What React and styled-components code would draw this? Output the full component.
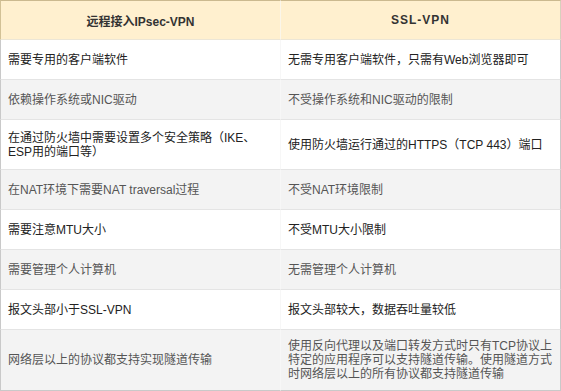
import React from "react";
import styled, { createGlobalStyle } from "styled-components";

const Global = createGlobalStyle`
  html, body { margin: 0; padding: 0; background: #fff; }
  body { font-family: "Liberation Sans", "Noto Sans CJK SC", sans-serif; }
`;

const Table = styled.div`
  width: 561px;
  height: 391px;
  box-sizing: border-box;
  display: grid;
  grid-template-columns: 280px 281px;
  grid-template-rows: 40px 40px 40px 50px 40px 40px 40px 40px 61px;
  font-size: 12px;
`;

const HeadCell = styled.div`
  background: #fff0cf;
  border-top: 1px solid #cbb98f;
  border-left: ${(p) => (p.$first ? "1px solid #d2c196" : "1px solid #fbf6ea")};
  border-right: ${(p) => (p.$first ? "none" : "1px solid #d8d0bc")};
  border-bottom: 1px solid #ece6d6;
  box-sizing: border-box;
  display: flex;
  align-items: center;
  justify-content: center;
  font-weight: bold;
  color: #333;
  letter-spacing: ${(p) => (p.$spaced ? "1px" : "0")};
`;

const Cell = styled.div`
  background: ${(p) => (p.$alt ? "#f3f3f3" : "#ffffff")};
  color: ${(p) => (p.$alt ? "#555" : "#222")};
  border-left: ${(p) => (p.$first ? "1px solid #c9c9c9" : "1px solid #f7f7f7")};
  border-right: ${(p) => (p.$first ? "none" : "1px solid #c9c9c9")};
  border-bottom: 1px solid ${(p) => (p.$last ? "#c9c9c9" : "#e4e4e4")};
  box-sizing: border-box;
  display: flex;
  align-items: center;
  padding: 0 6px 0 7px;
  line-height: 14px;
`;

const rows = [
  ["需要专用的客户端软件", "无需专用客户端软件，只需有Web浏览器即可"],
  ["依赖操作系统或NIC驱动", "不受操作系统和NIC驱动的限制"],
  [
    <>在通过防火墙中需要设置多个安全策略（IKE、<br />ESP用的端口等）</>,
    "使用防火墙运行通过的HTTPS（TCP 443）端口",
  ],
  ["在NAT环境下需要NAT traversal过程", "不受NAT环境限制"],
  ["需要注意MTU大小", "不受MTU大小限制"],
  ["需要管理个人计算机", "无需管理个人计算机"],
  ["报文头部小于SSL-VPN", "报文头部较大，数据吞吐量较低"],
  [
    "网络层以上的协议都支持实现隧道传输",
    <>使用反向代理以及端口转发方式时只有TCP协议上<br />特定的应用程序可以支持隧道传输。使用隧道方式<br />时网络层以上的所有协议都支持隧道传输</>,
  ],
];

export default function App() {
  return (
    <>
      <Global />
      <Table>
        <HeadCell $first>远程接入IPsec-VPN</HeadCell>
        <HeadCell $spaced>SSL-VPN</HeadCell>
        {rows.map((r, i) => (
          <React.Fragment key={i}>
            <Cell $first $alt={i % 2 === 1} $last={i === rows.length - 1}>{r[0]}</Cell>
            <Cell $alt={i % 2 === 1} $last={i === rows.length - 1}>{r[1]}</Cell>
          </React.Fragment>
        ))}
      </Table>
    </>
  );
}
